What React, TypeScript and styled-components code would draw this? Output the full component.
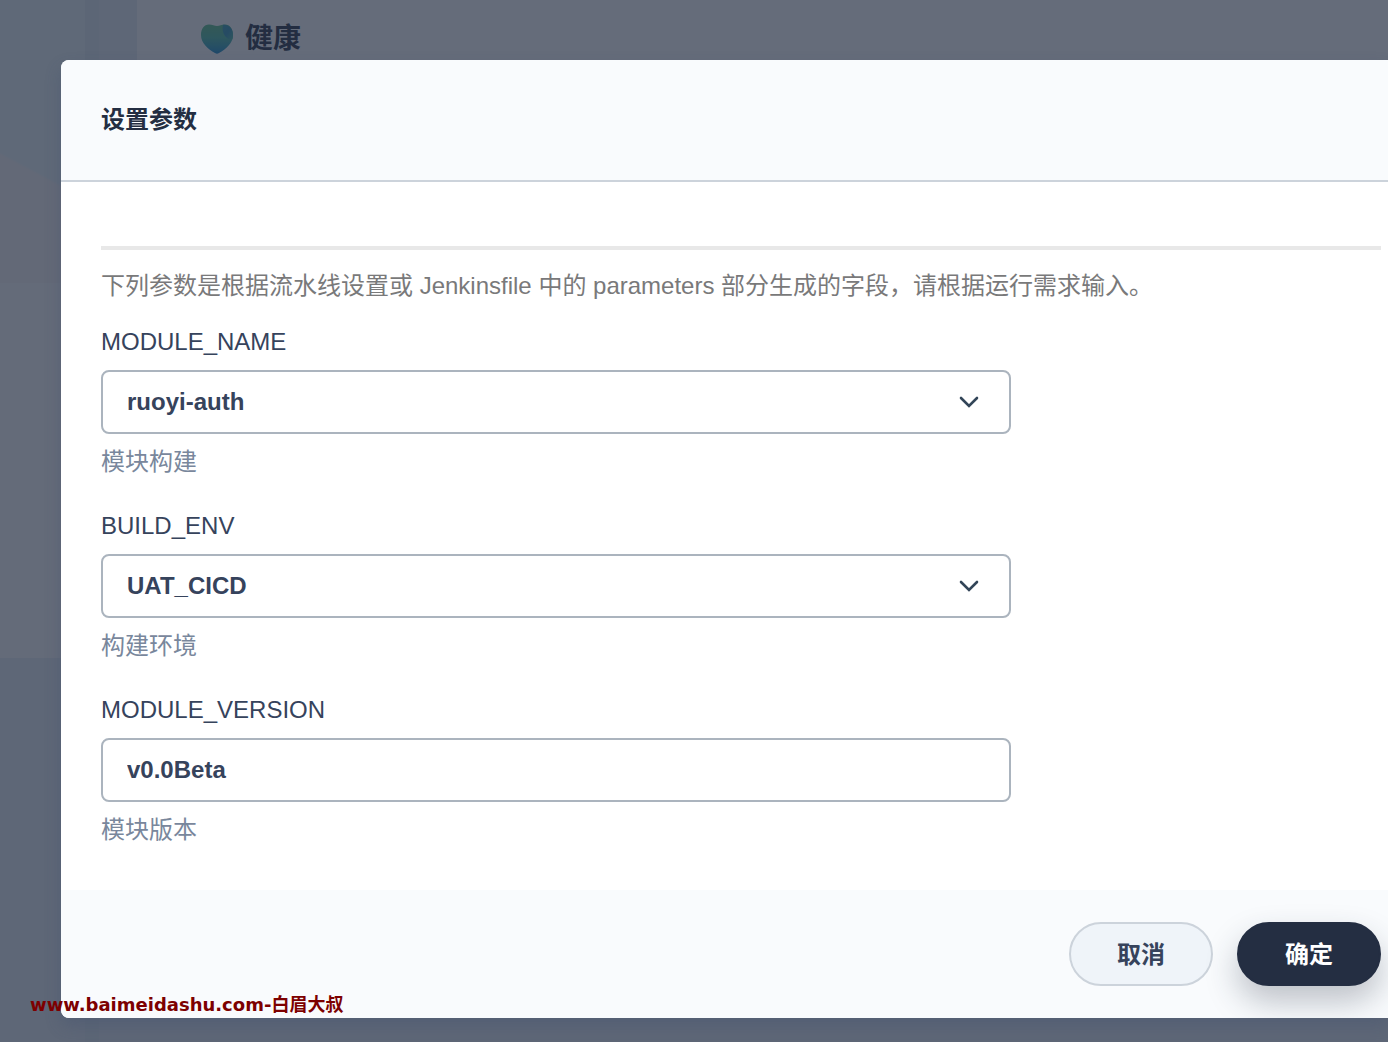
import React, { useState } from "react";
import styled, { createGlobalStyle } from "styled-components";

const sans = `"Liberation Sans", "Noto Sans CJK SC", sans-serif`;

const GlobalStyle = createGlobalStyle`
  *, *::before, *::after { box-sizing: border-box; }
  body { margin: 0; font-family: ${sans}; color: #36435c; }
`;

const Page = styled.div`
  position: relative;
  min-height: 100vh;
  display: grid;
  grid-template-columns: 85px 52px 1fr;
  overflow: hidden;
  background: #e7eef4;
`;

const Sidebar = styled.div`
  display: grid;
  grid-template-rows: 283px 375px 1fr;
`;

const SidebarTop = styled.div`
  background: linear-gradient(208deg, #eaf4f8 0 60%, #f8f6f5 61%);
`;

const SidebarPanel = styled.div`
  background: #fbfafb;
`;

const SidebarRest = styled.div`
  background: #e7eef4;
`;

const Gutter = styled.div`
  background: linear-gradient(90deg, #e2eaf0 0 14px, #e7eef4 14px);
`;

const Content = styled.main`
  margin-bottom: 64px;
  padding: 20px 64px;
  background: #fff;
`;

const Status = styled.div`
  display: flex;
  align-items: center;
  gap: 12px;
  font-size: 28px;
  line-height: 38px;
  font-weight: 700;
  color: #242e42;
`;

const Backdrop = styled.div`
  position: absolute;
  inset: 0;
  padding: 60px 0 24px 61px;
  background: rgba(36, 46, 66, 0.7);
`;

const Dialog = styled.form`
  display: flex;
  flex-direction: column;
  border-radius: 8px 0 0 8px;
  overflow: hidden;
  background: #fff;
  box-shadow: 0 8px 16px rgba(60, 75, 110, 0.3);
`;

const DialogHeader = styled.header`
  padding: 40px;
  border-bottom: 2px solid #ccd3db;
  background: #f9fbfd;
`;

const Title = styled.h1`
  margin: 0;
  font-size: 24px;
  line-height: 40px;
  font-weight: 700;
  color: #242e42;
`;

const DialogBody = styled.div`
  padding: 64px 7px 46px 40px;
`;

const Divider = styled.hr`
  height: 4px;
  margin: 0;
  border: 0;
  background: #e8e8e8;
`;

const Description = styled.p`
  margin: 16px 0 22px;
  font-size: 24px;
  line-height: 40px;
  color: #79797a;
`;

const Fields = styled.div`
  display: flex;
  flex-direction: column;
  gap: 36px;
  max-width: 910px;
`;

const Field = styled.div`
  display: flex;
  flex-direction: column;
  gap: 14px;
  font-size: 24px;
  line-height: 28px;
`;

const Help = styled.span`
  color: #79879c;
`;

const controlStyles = `
  width: 100%;
  height: 64px;
  padding: 0 24px;
  border: 2px solid #abb4be;
  border-radius: 8px;
  background: #fff;
  color: #36435c;
  font: 700 24px ${sans};
  outline: none;
`;

const TextInput = styled.input`
  ${controlStyles}
`;

const SelectBox = styled.div`
  display: grid;
  align-items: center;

  > * { grid-area: 1 / 1; }
`;

const Select = styled.select`
  ${controlStyles}
  padding-bottom: 2px;
  appearance: none;
`;

const Chevron = styled.svg`
  justify-self: end;
  margin-right: 32px;
  pointer-events: none;
`;

const DialogFooter = styled.footer`
  display: flex;
  justify-content: flex-end;
  gap: 24px;
  padding: 32px 7px 32px 40px;
  background: #f9fbfd;
`;

const Button = styled.button<{ $primary?: boolean }>`
  width: 144px;
  height: 64px;
  padding: 0 0 4px;
  border: 2px solid ${(p) => (p.$primary ? "#242e42" : "#ccd3db")};
  border-radius: 32px;
  background: ${(p) => (p.$primary ? "#242e42" : "#eff4f9")};
  color: ${(p) => (p.$primary ? "#fff" : "#36435c")};
  box-shadow: ${(p) => (p.$primary ? "0 16px 32px rgba(35, 45, 65, 0.28)" : "none")};
  font: 700 24px ${sans};
  cursor: pointer;
`;

const Watermark = styled.div`
  position: absolute;
  left: 30px;
  bottom: 25px;
  color: #7d0000;
  font: 700 18px/24px "DejaVu Sans", "Noto Sans CJK SC", sans-serif;
  white-space: nowrap;
`;

function HeartIcon() {
  return (
    <svg width="32" height="30" viewBox="0 0 32 30" aria-hidden="true">
      <defs>
        <linearGradient id="heart" x1="0" y1="0" x2="0" y2="1">
          <stop offset="0.1" stopColor="#55bc8a" />
          <stop offset="0.45" stopColor="#48b8a0" />
          <stop offset="1" stopColor="#1687c8" />
        </linearGradient>
        <linearGradient id="fold" x1="0" y1="0" x2="1" y2="1">
          <stop offset="0" stopColor="#329aae" />
          <stop offset="0.5" stopColor="#2d8fb4" />
          <stop offset="1" stopColor="#48b8a0" />
        </linearGradient>
      </defs>
      <path
        d="M8 .5C3 .5 0 5 0 11c0 8 7 14 14 18q2 1.300 4 0C25 25 32 19 32 11 32 5 29 .5 24 .5c-3.500 0-5.500 1.500-8 1.500S11.500.5 8 .5Z"
        fill="url(#heart)"
      />
      <path d="M22 .7C28 0 32 5 32 11q0 3-1 5C25 15 20 9 22 .7Z" fill="url(#fold)" />
    </svg>
  );
}

interface SelectFieldProps {
  id: string;
  help: string;
  options: string[];
}

function SelectField({ id, help, options }: SelectFieldProps) {
  const [value, setValue] = useState(options[0]);
  return (
    <Field>
      <label htmlFor={id}>{id}</label>
      <SelectBox>
        <Select id={id} value={value} onChange={(e) => setValue(e.target.value)}>
          {options.map((option) => (
            <option key={option}>{option}</option>
          ))}
        </Select>
        <Chevron width="20" height="12" viewBox="0 0 20 12" aria-hidden="true">
          <path
            d="M2 2l8 8 8-8"
            fill="none"
            stroke="#324558"
            strokeWidth="2.600"
            strokeLinecap="round"
          />
        </Chevron>
      </SelectBox>
      <Help>{help}</Help>
    </Field>
  );
}

export default function App() {
  return (
    <>
      <GlobalStyle />
      <Page>
        <Sidebar>
          <SidebarTop />
          <SidebarPanel />
          <SidebarRest />
        </Sidebar>
        <Gutter />
        <Content>
          <Status>
            <HeartIcon />
            健康
          </Status>
        </Content>
        <Backdrop>
          <Dialog role="dialog" aria-labelledby="dialog-title" onSubmit={(e) => e.preventDefault()}>
            <DialogHeader>
              <Title id="dialog-title">设置参数</Title>
            </DialogHeader>
            <DialogBody>
              <Divider />
              <Description>
                下列参数是根据流水线设置或 Jenkinsfile 中的 parameters 部分生成的字段，请根据运行需求输入。
              </Description>
              <Fields>
                <SelectField id="MODULE_NAME" help="模块构建" options={["ruoyi-auth"]} />
                <SelectField id="BUILD_ENV" help="构建环境" options={["UAT_CICD"]} />
                <Field>
                  <label htmlFor="MODULE_VERSION">MODULE_VERSION</label>
                  <TextInput id="MODULE_VERSION" defaultValue="v0.0Beta" />
                  <Help>模块版本</Help>
                </Field>
              </Fields>
            </DialogBody>
            <DialogFooter>
              <Button type="button">取消</Button>
              <Button type="submit" $primary>
                确定
              </Button>
            </DialogFooter>
          </Dialog>
        </Backdrop>
        <Watermark>www.baimeidashu.com-白眉大叔</Watermark>
      </Page>
    </>
  );
}
